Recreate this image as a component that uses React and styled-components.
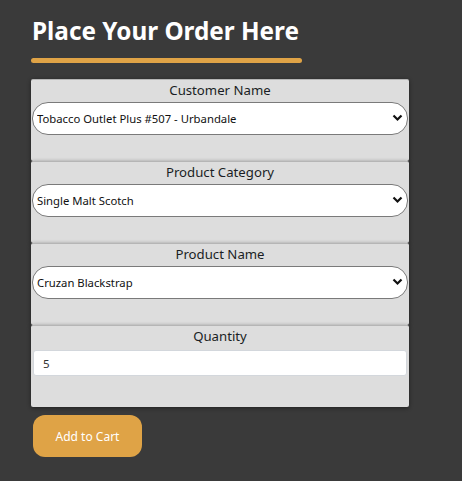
import React, { useState } from 'react'
import styled, { createGlobalStyle } from 'styled-components'

const GlobalStyle = createGlobalStyle`
    html, body {
        margin: 0;
        padding: 0;
        background: #3a3a3a;
        font-family: "Noto Sans", "Open Sans", sans-serif;
    }
`

const Page = styled.div`
    width: 462px;
    height: 481px;
    padding: 14px 0 0 31px;
    box-sizing: border-box;
    overflow: hidden;
`

const Title = styled.h1`
    margin: 0 0 0 1px;
    color: #ffffff;
    font-size: 24.3px;
    font-weight: 700;
    line-height: 34px;
`

const Underline = styled.div`
    width: 271px;
    height: 5px;
    margin-top: 10px;
    background: #dfa346;
    border-radius: 3px;
`

const Form = styled.form`
    display: flex;
    flex-direction: column;
    width: 378px;
    margin-top: 16px;
`

const Card = styled.div`
    height: 82px;
    box-sizing: border-box;
    background: #dddddd;
    border-top: 1px solid #b5b5b5;
    border-radius: 2px;
    box-shadow: 0 1px 4px rgba(0, 0, 0, 0.45);
    display: flex;
    flex-direction: column;
    align-items: stretch;
`

const Label = styled.label`
    text-align: center;
    color: #1a1d24;
    font-size: 13.2px;
    font-weight: 400;
    line-height: 20px;
`

const SelectWrap = styled.div`
    position: relative;
    margin: 2px 1px 0 1px;
`

const Select = styled.select`
    appearance: none;
    width: 100%;
    height: 33px;
    box-sizing: border-box;
    padding: 0 24px 0 4px;
    background: #ffffff;
    border: 1px solid #7a7a7a;
    border-radius: 16px;
    color: #111111;
    font-family: "Noto Sans", sans-serif;
    font-size: 11.3px;
    outline: none;
`

const Chevron = styled.svg`
    position: absolute;
    right: 5px;
    top: 12px;
    pointer-events: none;
`

const Input = styled.input`
    margin: 4px 2px 0 2px;
    height: 26px;
    box-sizing: border-box;
    padding: 0 9px;
    background: #ffffff;
    border: 1px solid #d3d7dc;
    border-radius: 3px;
    color: #333;
    font-family: "Noto Sans", sans-serif;
    font-size: 11.5px;
    outline: none;
`

const AddButton = styled.button`
    margin: 8px 0 0 2px;
    width: 109px;
    height: 42px;
    background: #dfa346;
    color: #ffffff;
    border: none;
    border-radius: 12px;
    font-family: "Noto Sans", sans-serif;
    font-size: 12px;
`

const DropDown = ({ label, value, options }) =>
{
    return (
        <Card>
            <Label>{label}</Label>
            <SelectWrap>
                <Select defaultValue={value}>
                    {options.map(o => <option key={o}>{o}</option>)}
                </Select>
                <Chevron width="11" height="8" viewBox="0 0 11 8">
                    <path d="M1.5 1.5 L5.5 5.5 L9.5 1.5" fill="none" stroke="#111" strokeWidth="2.2" />
                </Chevron>
            </SelectWrap>
        </Card>
    )
}

const App = () =>
{
    const [qty, setQty] = useState('5')

    return (
        <>
            <GlobalStyle />
            <Page>
                <Title>Place Your Order Here</Title>
                <Underline />
                <Form onSubmit={e => e.preventDefault()}>
                    <DropDown label='Customer Name' value='Tobacco Outlet Plus #507 - Urbandale'
                        options={['Tobacco Outlet Plus #507 - Urbandale']} />
                    <DropDown label='Product Category' value='Single Malt Scotch'
                        options={['Single Malt Scotch']} />
                    <DropDown label='Product Name' value='Cruzan Blackstrap'
                        options={['Cruzan Blackstrap']} />
                    <Card>
                        <Label>Quantity</Label>
                        <Input type='text' value={qty} onChange={e => setQty(e.target.value)} />
                    </Card>
                </Form>
                <AddButton type='button'>Add to Cart</AddButton>
            </Page>
        </>
    )
}

export default App
